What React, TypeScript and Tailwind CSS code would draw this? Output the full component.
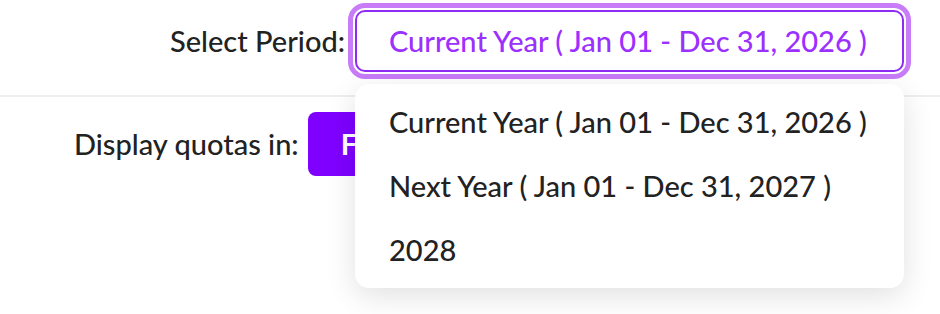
import { useState } from "react"

const periods = [
    "Current Year ( Jan 01 - Dec 31, 2026 )",
    "Next Year ( Jan 01 - Dec 31, 2027 )",
    "2028",
]

export default function App() {
    const [selected, setSelected] = useState(periods[0])
    const [open, setOpen] = useState(true)

    return (
        <main className="w-[940px] h-[314px] bg-white overflow-hidden text-[#222] font-['Lato','Noto_Sans',sans-serif]">
            {/* Period selector */}
            <div className="h-[97px] flex items-start justify-end pt-[10px] pr-[36px] border-b-2 border-[#eeeeee]">
                <div className="flex items-center gap-[10px]">
                    <span className="text-[29px] font-medium">Select Period:</span>
                    <div className="relative">
                        <button
                            onClick={() => setOpen(!open)}
                            className="h-[62px] w-[549px] px-[32px] text-left whitespace-nowrap rounded-[10px] border-2 border-[#8f2cf4] text-[#9b30ff] text-[29px] font-medium outline-[5px] outline-solid outline-[#c87cf8] outline-offset-[2px]"
                        >
                            {selected}
                        </button>

                        {open && (
                            <ul className="absolute z-10 left-0 right-0 top-full mt-[12px] py-[6px] bg-white rounded-[14px] shadow-[0_8px_30px_rgba(0,0,0,0.12)]">
                                {periods.map((p) => (
                                    <li
                                        key={p}
                                        onClick={() => {
                                            setSelected(p)
                                            setOpen(false)
                                        }}
                                        className="h-[64px] flex items-center px-[34px] whitespace-nowrap text-[29px] font-medium cursor-pointer"
                                    >
                                        {p}
                                    </li>
                                ))}
                            </ul>
                        )}
                    </div>
                </div>
            </div>

            {/* Quota unit */}
            <div className="flex items-center gap-[9px] pl-[74px] pt-[15px]">
                <span className="text-[29px] font-medium">Display quotas in:</span>
                <button className="h-[64px] px-[33px] rounded-[8px] bg-[#7f00ff] text-white text-[29px] font-bold">
                    FTE
                </button>
            </div>
        </main>
    )
}
